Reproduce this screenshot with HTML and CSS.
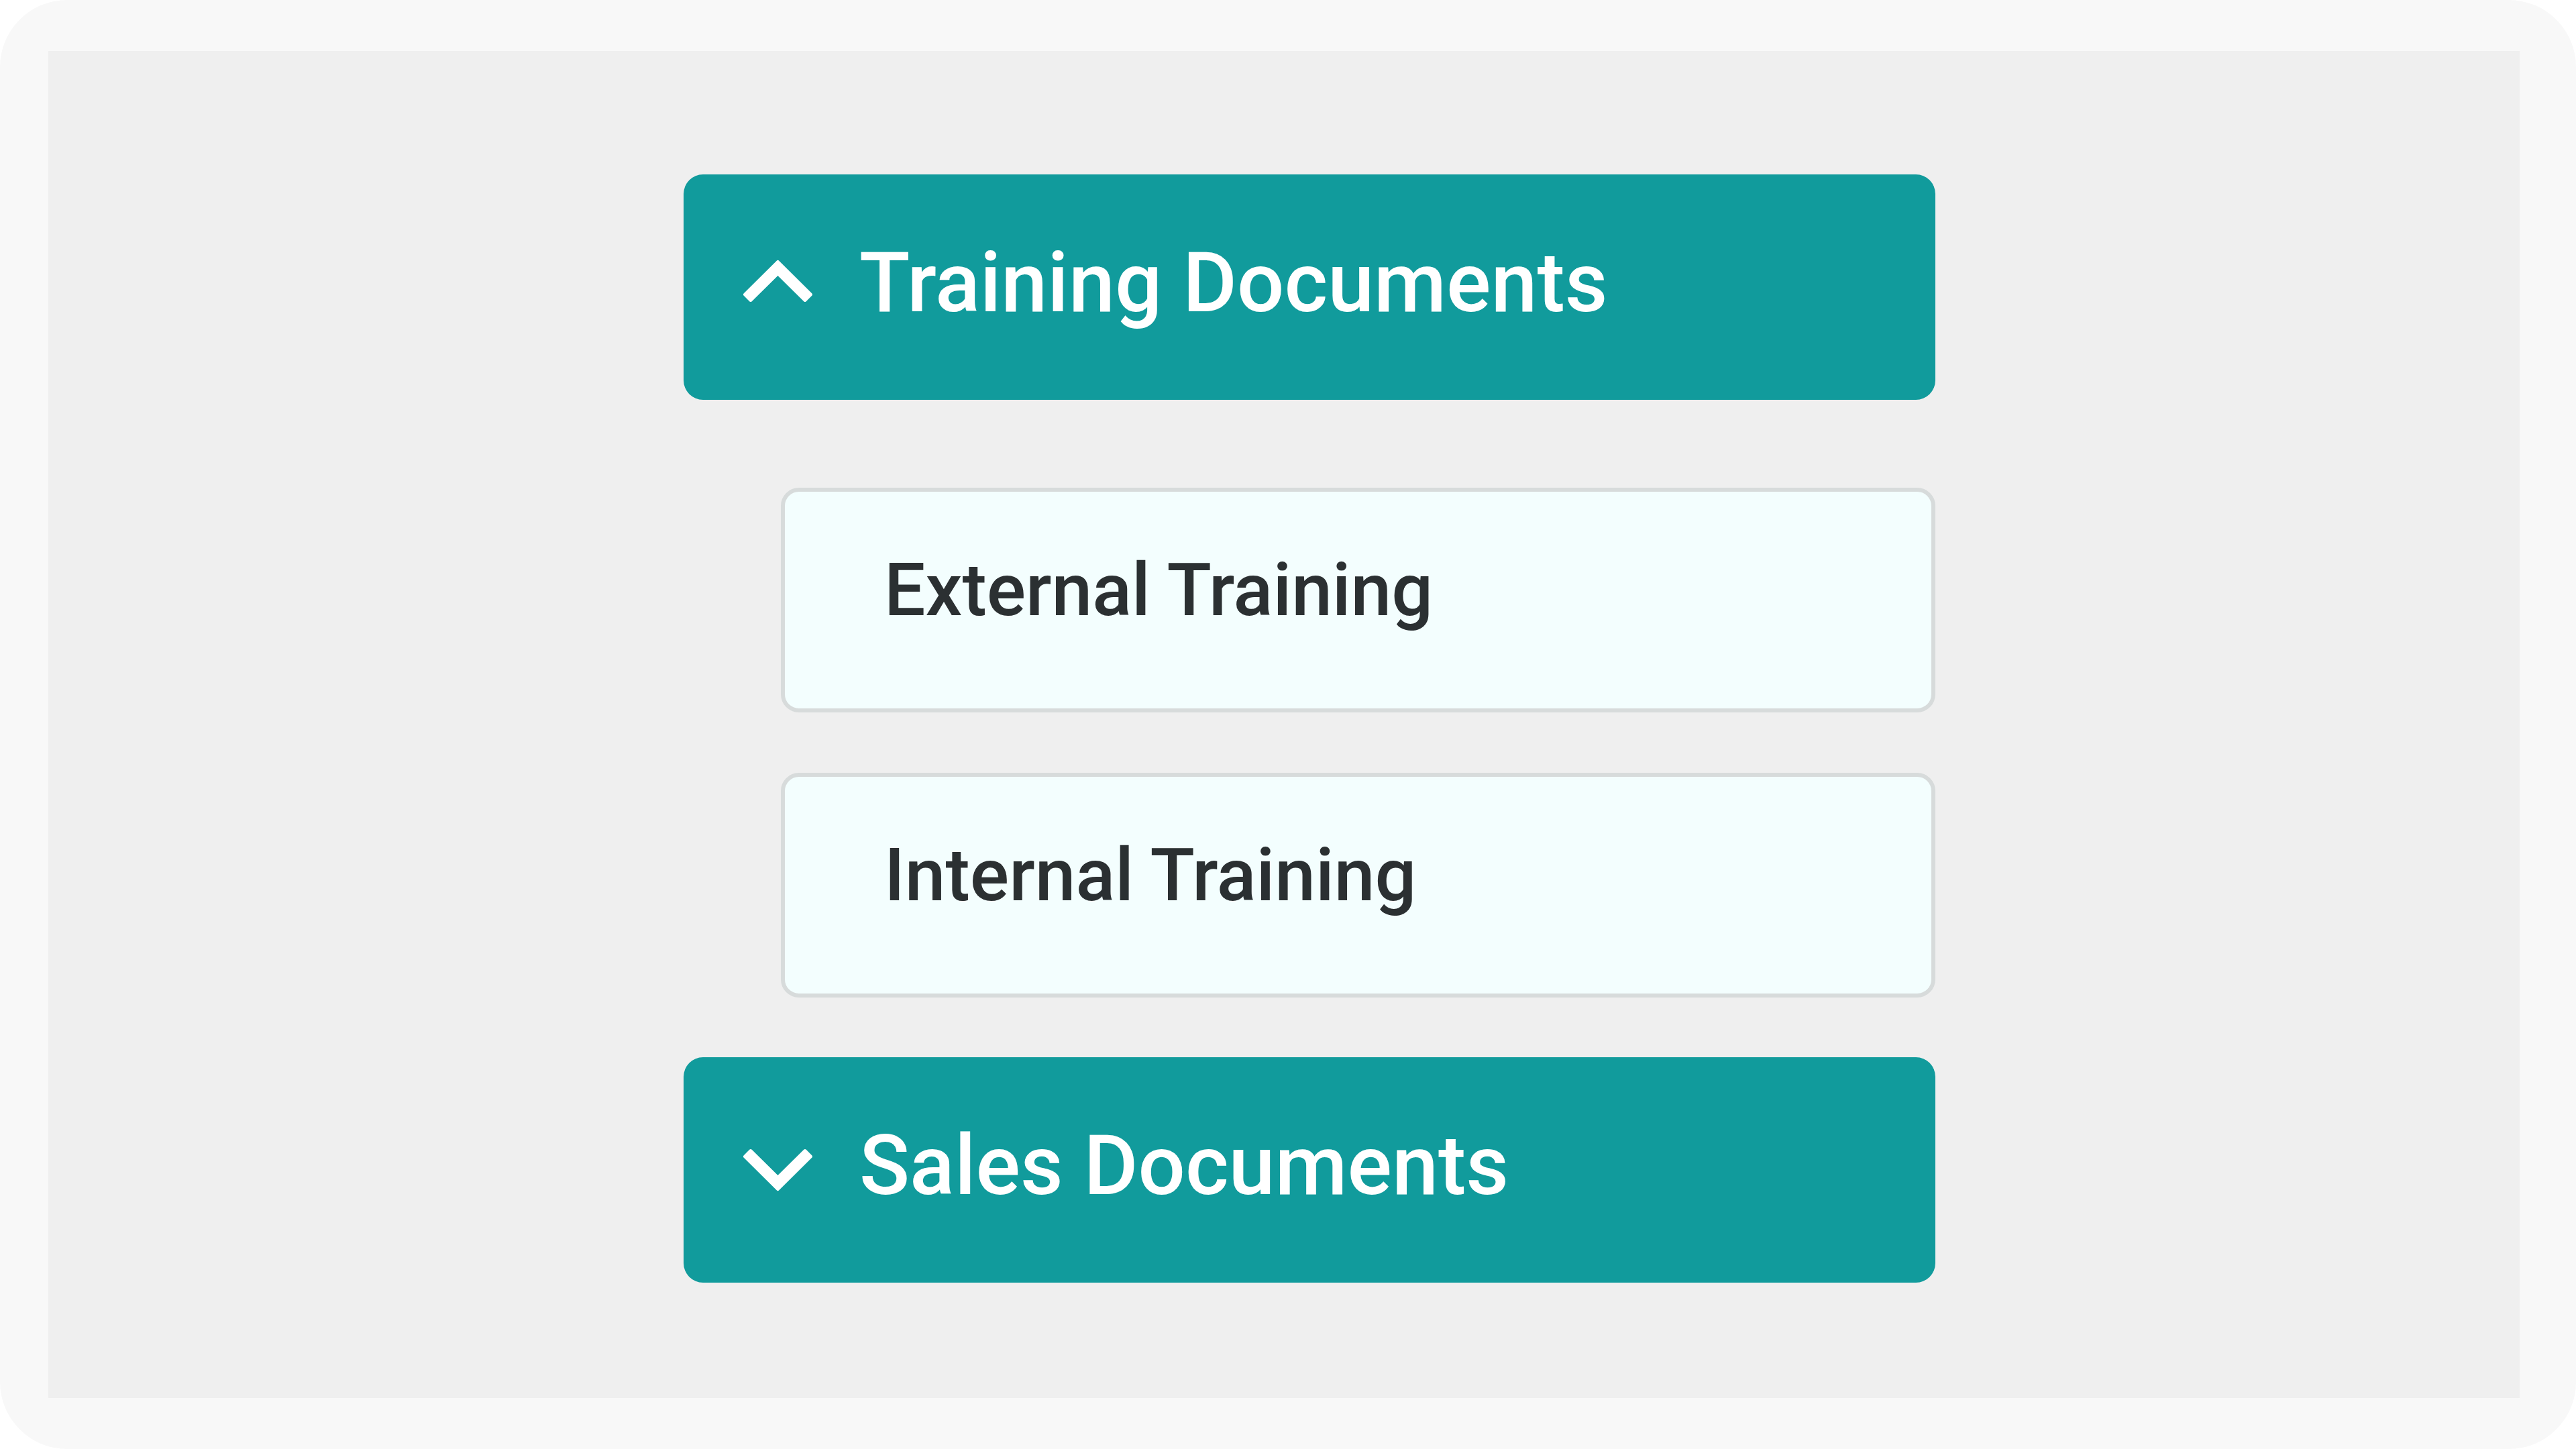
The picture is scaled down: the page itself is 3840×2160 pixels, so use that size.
FILE: index.html
```html
<!DOCTYPE html>
<html lang="en">
<head>
<meta charset="utf-8">
<title>Documents</title>
<link rel="stylesheet" href="styles.css">
</head>
<body>
<div class="frame">
  <div class="canvas">
    <div class="accordion">
      <section class="section">
        <div class="section-header">
          <svg class="chevron chevron-up" width="105" height="64" viewBox="0 0 105 64" aria-hidden="true">
            <polygon points="52.5,3.5 101.46,52 93,60.46 52.5,20.5 12,60.46 3.54,52" fill="#ffffff" stroke="#ffffff" stroke-width="5" stroke-linejoin="round"/>
          </svg>
          <span class="section-title">Training Documents</span>
        </div>
        <div class="section-body">
          <div class="item">External Training</div>
          <div class="item">Internal Training</div>
        </div>
      </section>
      <section class="section">
        <div class="section-header">
          <svg class="chevron chevron-down" width="105" height="64" viewBox="0 0 105 64" aria-hidden="true">
            <polygon points="52.5,60.5 101.46,12 93,3.54 52.5,43.5 12,3.54 3.54,12" fill="#ffffff" stroke="#ffffff" stroke-width="5" stroke-linejoin="round"/>
          </svg>
          <span class="section-title">Sales Documents</span>
        </div>
      </section>
    </div>
  </div>
</div>
</body>
</html>
```
FILE: styles.css
```css
* {
  box-sizing: border-box;
}

html, body {
  margin: 0;
  padding: 0;
  background: #ffffff;
}

body {
  font-family: Roboto, "Liberation Sans", sans-serif;
}

.frame {
  width: 3840px;
  height: 2160px;
  background: #f8f8f8;
  border-radius: 100px;
  padding: 76px 84px 76px 72px;
}

.canvas {
  width: 100%;
  height: 100%;
  background: #efefef;
  padding: 184px 0 0 947px;
}

.accordion {
  width: 1866px;
  display: flex;
  flex-direction: column;
}

.section-header {
  height: 336px;
  background: #119b9c;
  border-radius: 29px;
  display: flex;
  align-items: center;
  padding: 0 0 14px 88px;
  color: #ffffff;
}

.chevron {
  flex: none;
  margin-right: 69px;
}

.chevron-up {
  margin-bottom: 4px;
}

.chevron-down {
  margin-top: 14px;
}

.section-title {
  font-size: 124px;
  font-weight: 500;
  white-space: nowrap;
}

.section-body {
  display: flex;
  flex-direction: column;
  gap: 90px;
  padding: 131px 0 89px 145px;
}

.item {
  height: 335px;
  background: #f3fefe;
  border: 6px solid #d7dbdb;
  border-radius: 27px;
  display: flex;
  align-items: center;
  padding: 0 0 30px 148px;
  font-size: 109px;
  font-weight: 500;
  color: #2b3032;
  white-space: nowrap;
}
```
